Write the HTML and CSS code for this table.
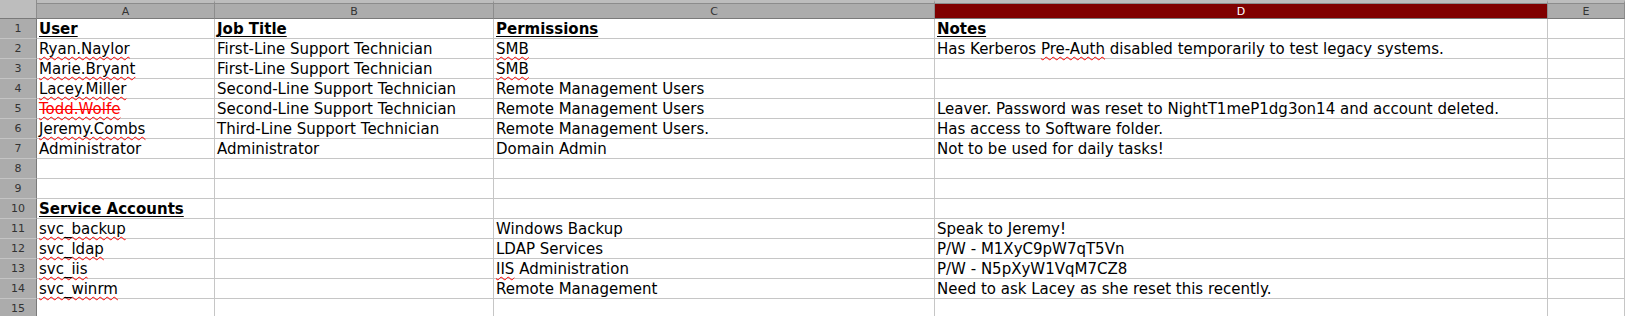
FILE: index.html
```html
<!DOCTYPE html>
<html>
<head>
<meta charset="utf-8">
<link rel="stylesheet" href="styles.css">
</head>
<body>
<div class="sheet">
  <div class="corner"></div>
  <div class="colhead">A</div>
  <div class="colhead">B</div>
  <div class="colhead">C</div>
  <div class="colhead sel">D</div>
  <div class="colhead">E</div>
  <div class="rest"></div>

  <div class="rowhead">1</div>
  <div class="cell"><span class="hdr">User</span></div>
  <div class="cell"><span class="hdr">Job Title</span></div>
  <div class="cell"><span class="hdr">Permissions</span></div>
  <div class="cell"><span class="hdr">Notes</span></div>
  <div class="cell"></div><div class="rest"></div>

  <div class="rowhead">2</div>
  <div class="cell"><span class="sp">Ryan.Naylor</span></div>
  <div class="cell">First-Line Support Technician</div>
  <div class="cell"><span class="sp">SMB</span></div>
  <div class="cell">Has Kerberos&nbsp;<span class="sp">Pre-Auth</span>&nbsp;disabled temporarily to test legacy systems.</div>
  <div class="cell"></div><div class="rest"></div>

  <div class="rowhead">3</div>
  <div class="cell"><span class="sp">Marie.Bryant</span></div>
  <div class="cell">First-Line Support Technician</div>
  <div class="cell"><span class="sp">SMB</span></div>
  <div class="cell"></div>
  <div class="cell"></div><div class="rest"></div>

  <div class="rowhead">4</div>
  <div class="cell"><span class="sp">Lacey.Miller</span></div>
  <div class="cell">Second-Line Support Technician</div>
  <div class="cell">Remote Management Users</div>
  <div class="cell"></div>
  <div class="cell"></div><div class="rest"></div>

  <div class="rowhead">5</div>
  <div class="cell"><span class="struck"><span class="sp">Todd.Wolfe</span></span></div>
  <div class="cell">Second-Line Support Technician</div>
  <div class="cell">Remote Management Users</div>
  <div class="cell">Leaver. Password was reset to NightT1meP1dg3on14 and account deleted.</div>
  <div class="cell"></div><div class="rest"></div>

  <div class="rowhead">6</div>
  <div class="cell"><span class="sp">Jeremy.Combs</span></div>
  <div class="cell">Third-Line Support Technician</div>
  <div class="cell">Remote Management Users.</div>
  <div class="cell">Has access to Software folder.</div>
  <div class="cell"></div><div class="rest"></div>

  <div class="rowhead">7</div>
  <div class="cell">Administrator</div>
  <div class="cell">Administrator</div>
  <div class="cell">Domain Admin</div>
  <div class="cell">Not to be used for daily tasks!</div>
  <div class="cell"></div><div class="rest"></div>

  <div class="rowhead">8</div>
  <div class="cell"></div><div class="cell"></div><div class="cell"></div><div class="cell"></div><div class="cell"></div><div class="rest"></div>

  <div class="rowhead">9</div>
  <div class="cell"></div><div class="cell"></div><div class="cell"></div><div class="cell"></div><div class="cell"></div><div class="rest"></div>

  <div class="rowhead">10</div>
  <div class="cell"><span class="hdr">Service Accounts</span></div>
  <div class="cell"></div><div class="cell"></div><div class="cell"></div><div class="cell"></div><div class="rest"></div>

  <div class="rowhead">11</div>
  <div class="cell"><span class="sp">svc_backup</span></div>
  <div class="cell"></div>
  <div class="cell">Windows Backup</div>
  <div class="cell">Speak to Jeremy!</div>
  <div class="cell"></div><div class="rest"></div>

  <div class="rowhead">12</div>
  <div class="cell"><span class="sp">svc_ldap</span></div>
  <div class="cell"></div>
  <div class="cell">LDAP Services</div>
  <div class="cell">P/W - M1XyC9pW7qT5Vn</div>
  <div class="cell"></div><div class="rest"></div>

  <div class="rowhead">13</div>
  <div class="cell"><span class="sp">svc_iis</span></div>
  <div class="cell"></div>
  <div class="cell"><span class="sp">IIS</span>&nbsp;Administration</div>
  <div class="cell">P/W - N5pXyW1VqM7CZ8</div>
  <div class="cell"></div><div class="rest"></div>

  <div class="rowhead">14</div>
  <div class="cell"><span class="sp">svc_winrm</span></div>
  <div class="cell"></div>
  <div class="cell">Remote Management</div>
  <div class="cell">Need to ask Lacey as she reset this recently.</div>
  <div class="cell"></div><div class="rest"></div>

  <div class="rowhead">15</div>
  <div class="cell"></div><div class="cell"></div><div class="cell"></div><div class="cell"></div><div class="cell"></div><div class="rest"></div>
</div>
</body>
</html>
```
FILE: styles.css
```css
html, body {
  margin: 0;
  padding: 0;
  background: #ffffff;
}
.sheet {
  display: grid;
  grid-template-columns: 37px 178px 279px 441px 613px 77px 1fr;
  grid-template-rows: 19px;
  grid-auto-rows: 20px;
  font-family: "DejaVu Sans", sans-serif;
  font-size: 15px;
  color: #000;
  width: 1625px;
  overflow: hidden;
}
.sheet > div {
  box-sizing: border-box;
}
.corner {
  background: #bdbdbd;
  border-right: 1px solid #8c8c8c;
  border-bottom: 1px solid #7a7a7a;
}
.colhead {
  background: #acacac;
  border-top: 3px solid #bdbdbd;
  border-right: 1px solid #8c8c8c;
  border-bottom: 1px solid #7a7a7a;
  box-shadow: inset 0 1px 0 #8c8c8c;
  font-size: 11px;
  color: #333;
  display: flex;
  align-items: center;
  justify-content: center;
  padding-top: 1px;
}
.colhead.sel {
  background: #800000;
  color: #ffffff;
}
.rest {
  background: #bdbdbd;
}
.rowhead {
  background: #acacac;
  border-right: 1px solid #7a7a7a;
  border-bottom: 1px solid #c4c4c4;
  font-size: 11px;
  color: #333;
  display: flex;
  align-items: center;
  justify-content: center;
}
.cell {
  border-right: 1px solid #c6c6c6;
  border-bottom: 1px solid #c6c6c6;
  display: flex;
  align-items: flex-end;
  padding: 0 2px 0 2px;
  white-space: nowrap;
  line-height: 18px;
}
.hdr {
  font-weight: bold;
  text-decoration: underline;
  text-decoration-thickness: 1px;
  text-underline-offset: 2px;
}
.sp {
  text-decoration: underline wavy #ff0000;
  text-decoration-thickness: 1px;
  text-underline-offset: 2px;
  text-decoration-skip-ink: none;
}
.struck {
  color: #ff0000;
  text-decoration: line-through #ff0000;
  text-decoration-thickness: 1px;
}
```
